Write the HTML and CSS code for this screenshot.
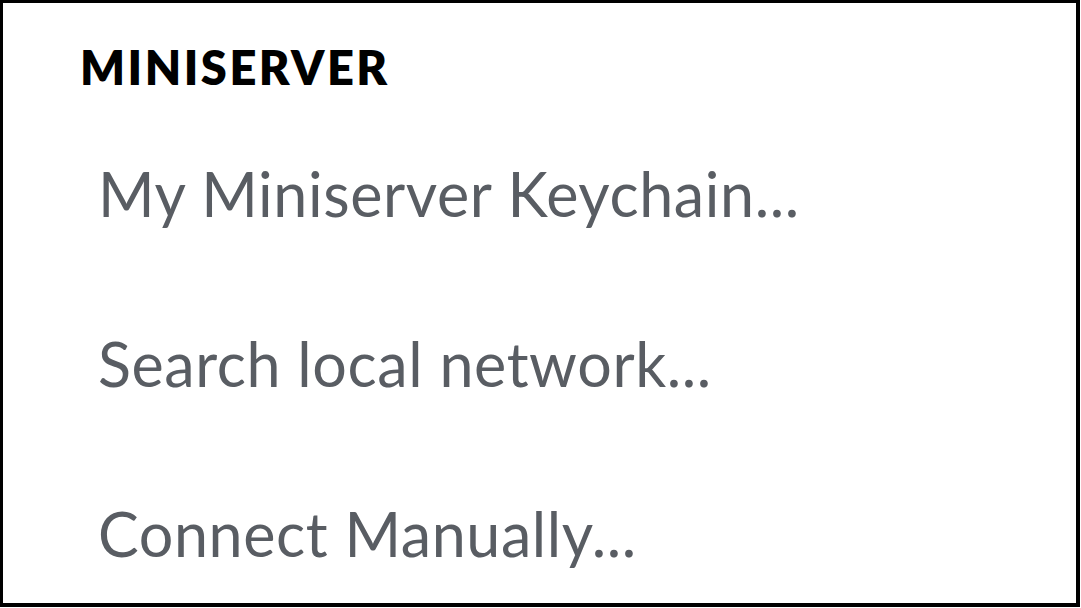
FILE: index.html
```html
<!DOCTYPE html>
<html>
<head>
<meta charset="utf-8">
<link rel="stylesheet" href="styles.css">
</head>
<body>
<div class="panel">
  <div class="title">MINISERVER</div>
  <ul class="menu">
    <li class="item">My Miniserver Keychain...</li>
    <li class="item">Search local network...</li>
    <li class="item">Connect Manually...</li>
  </ul>
</div>
</body>
</html>
```
FILE: styles.css
```css
html, body {
  margin: 0;
  padding: 0;
  background: #ffffff;
}
.panel {
  box-sizing: border-box;
  width: 1080px;
  height: 607px;
  border: 4px solid #000000;
  border-top-width: 3px;
  border-left-width: 3px;
  padding: 36px 0 0 77px;
  font-family: "Lato", "Open Sans", sans-serif;
  display: flex;
  flex-direction: column;
}
.title {
  font-size: 47px;
  font-weight: 800;
  line-height: 56px;
  color: #000000;
  letter-spacing: 2.5px;
}
.menu {
  list-style: none;
  margin: 0;
  padding: 0 0 0 18px;
  display: flex;
  flex-direction: column;
  gap: 100px;
  margin-top: 64px;
}
.item {
  font-size: 61px;
  line-height: 70px;
  color: #595d63;
  letter-spacing: 0.6px;
}
```
